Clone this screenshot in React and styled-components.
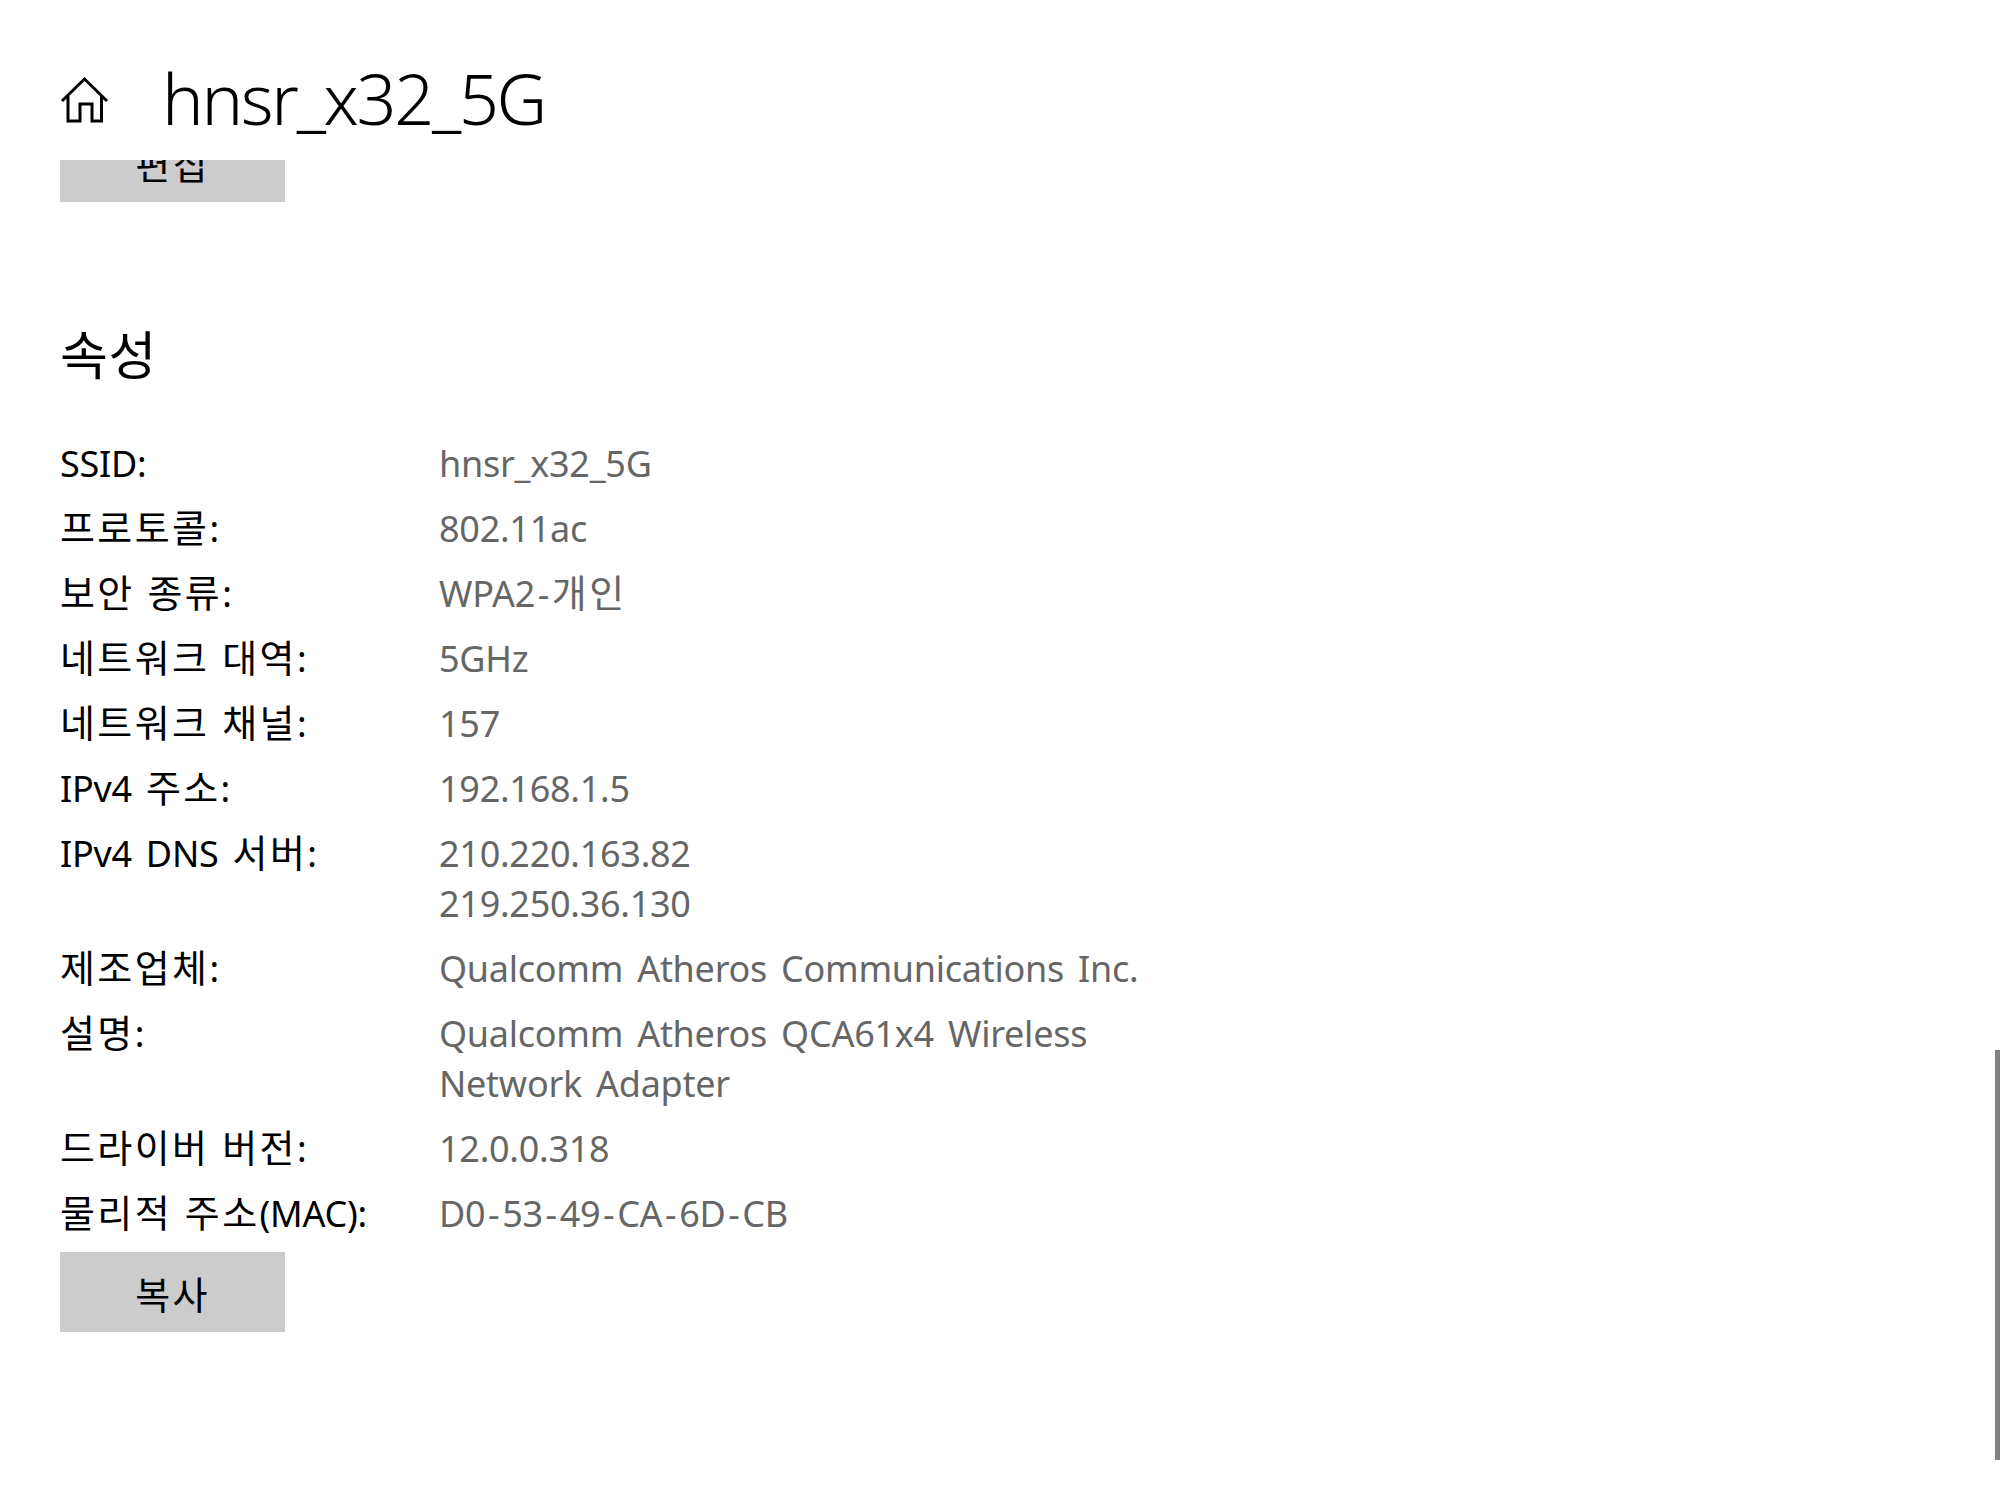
import React from "react";
import styled, { createGlobalStyle } from "styled-components";

const Global = createGlobalStyle`
  html, body { margin: 0; padding: 0; background: #fff; }
`;
const KR = `"Noto Sans", "Noto Sans CJK KR", sans-serif`;

const Page = styled.div`
  position: relative;
  width: 2000px;
  height: 1500px;
  overflow: hidden;
  background: #fff;
  font-family: ${KR};
  color: #000;
  display: flex;
  flex-direction: column;
`;
const Header = styled.header`
  flex: 0 0 160px;
  display: flex;
  align-items: center;
  padding: 36px 0 0 60px;
  gap: 52px;
  box-sizing: border-box;
`;
const HomeIcon = styled.svg`
  width: 50px;
  height: 50px;
  flex: none;
  margin-top: 4px;
`;
const Title = styled.h1`
  margin: 0;
  font-size: 70px;
  font-weight: 300;
  line-height: 100px;
  letter-spacing: -2.3px;
`;
const Scroller = styled.main`
  flex: 1;
  overflow: hidden;
`;
const Content = styled.div`
  margin-top: -38px;
  padding: 0 60px;
`;
const Button = styled.div`
  width: 225px;
  height: 80px;
  box-sizing: border-box;
  padding-top: 3px;
  background: #ccc;
  display: flex;
  align-items: center;
  justify-content: center;
  font-size: 36px;
  line-height: 50px;
`;
const Heading = styled.h2`
  margin: 118px 0 49px;
  font-size: 52px;
  font-weight: 400;
  line-height: 70px;
  letter-spacing: 0.6px;
`;
const Rows = styled.div`
  display: flex;
  flex-direction: column;
  gap: 15px;
`;
const Row = styled.div`
  display: grid;
  grid-template-columns: 379px 720px;
  font-size: 36px;
  line-height: 50px;
  font-weight: 400;
  letter-spacing: -0.27px;
  word-spacing: 5px;
`;
const Label = styled.div`
  color: #000;
  white-space: nowrap;
`;
const Value = styled.div`
  color: #666;
`;
const Hangul = styled.span`
  font-size: 38px;
  line-height: 0;
  letter-spacing: 2.4px;
  word-spacing: 0.5px;
`;
const Hyphen = styled.span`
  margin: 0 2.75px;
`;
const Copy = styled(Button)`
  margin-top: 13px;
`;
const ScrollThumb = styled.div`
  position: absolute;
  right: 0;
  top: 1050px;
  width: 5px;
  height: 410px;
  background: #808080;
`;

const Text = ({ children }) =>
  children
    .split(/([\uAC00-\uD7A3]+(?: [\uAC00-\uD7A3]+)*|-)/)
    .map((part, i) =>
      part === "-" ? (
        <Hyphen key={i}>-</Hyphen>
      ) : /[\uAC00-\uD7A3]/.test(part) ? (
        <Hangul key={i}>{part}</Hangul>
      ) : (
        part
      )
    );

const rows = [
  ["SSID:", "hnsr_x32_5G"],
  ["프로토콜:", "802.11ac"],
  ["보안 종류:", "WPA2-개인"],
  ["네트워크 대역:", "5GHz"],
  ["네트워크 채널:", "157"],
  ["IPv4 주소:", "192.168.1.5"],
  ["IPv4 DNS 서버:", "210.220.163.82\n219.250.36.130"],
  ["제조업체:", "Qualcomm Atheros Communications Inc."],
  ["설명:", "Qualcomm Atheros QCA61x4 Wireless Network Adapter"],
  ["드라이버 버전:", "12.0.0.318"],
  ["물리적 주소(MAC):", "D0-53-49-CA-6D-CB"],
];

export default function App() {
  return (
    <Page>
      <Global />
      <Header>
        <HomeIcon viewBox="0 0 50 50" fill="none" stroke="#000" strokeWidth="3">
          <path d="M2 26 L24.5 4 L47 26" />
          <path d="M8 21 V46 H20 V29 H32 V46 H41.5 V21" />
        </HomeIcon>
        <Title>hnsr_x32_5G</Title>
      </Header>
      <Scroller>
        <Content>
          <Button><Text>편집</Text></Button>
          <Heading>속성</Heading>
          <Rows>
            {rows.map(([k, v]) => (
              <Row key={k}>
                <Label><Text>{k}</Text></Label>
                <Value>
                  {v.split("\n").map((l) => (
                    <div key={l}><Text>{l}</Text></div>
                  ))}
                </Value>
              </Row>
            ))}
          </Rows>
          <Copy><Text>복사</Text></Copy>
        </Content>
      </Scroller>
      <ScrollThumb />
    </Page>
  );
}
